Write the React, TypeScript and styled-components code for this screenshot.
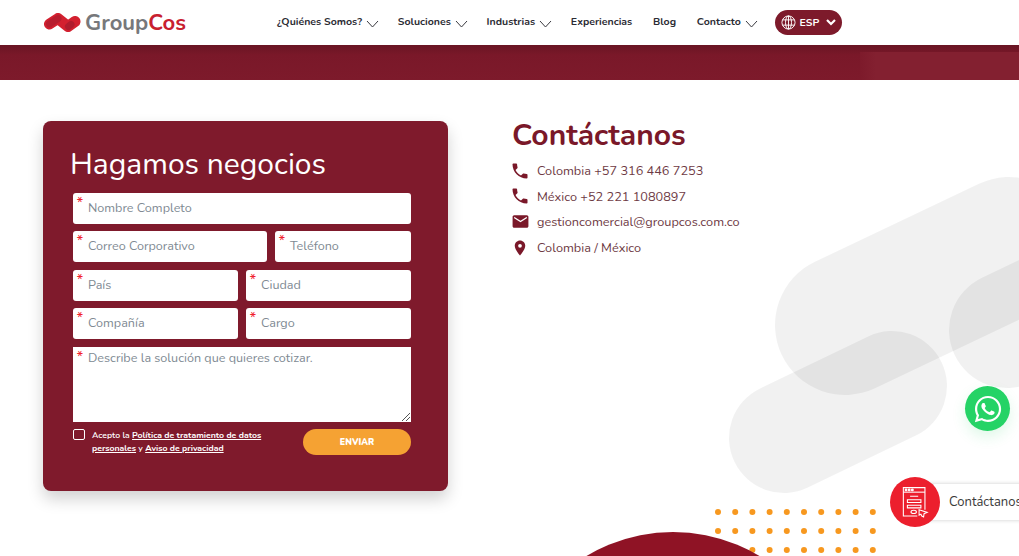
import * as React from "react";
import styled, { createGlobalStyle } from "styled-components";
import { MdPhone, MdEmail, MdLocationOn } from "react-icons/md";
import { FaWhatsapp } from "react-icons/fa";

const FONT = `Nunito, Lato, "Open Sans", sans-serif`;

const GlobalStyle = createGlobalStyle`
  html, body {
    margin: 0;
    padding: 0;
    height: 100%;
    overflow: hidden;
    background: #fff;
    font-family: ${FONT};
  }
  * { box-sizing: border-box; }
`;

const SPage = styled.div`
  position: relative;
  width: 1019px;
  height: 556px;
  overflow: hidden;
  background: #fff;
`;

const SHeader = styled.header`
  height: 45px;
  padding: 0 0 0 44px;
  display: flex;
  align-items: center;
  background: #fff;
`;

const SLogo = styled.div`
  display: flex;
  align-items: center;
  gap: 4px;
  width: 233px;
`;

const SLogoText = styled.span`
  font-size: 22px;
  font-weight: 700;
  color: #77787b;
  & b {
    color: #c8202f;
    font-weight: 700;
  }
`;

const SNav = styled.nav`
  display: flex;
  align-items: center;
  gap: 20.8px;
  padding-bottom: 2px;
`;

const SNavItem = styled.a`
  display: flex;
  align-items: center;
  gap: 4px;
  font-size: 10.55px;
  font-weight: 700;
  color: #2b2b33;
  white-space: nowrap;
`;

const SNavChevron = styled.svg`
  margin: 4px -2px 0 0;
`;

const SLang = styled.div`
  width: 67px;
  height: 25px;
  margin: 2px 0 0 -2px;
  border-radius: 13px;
  background: #7d1a2b;
  color: #fff;
  font-size: 10.5px;
  font-weight: 700;
  display: flex;
  align-items: center;
  padding-left: 6px;
  gap: 4px;
`;

const SLangChevron = styled.svg`
  margin-left: 3px;
`;

const SBanner = styled.div`
  position: relative;
  height: 35px;
  overflow: hidden;
  background: linear-gradient(#691524 0, #7a1829 10px, #7d1a2b 100%);
`;

const SBannerGlow = styled.div`
  position: absolute;
  top: 7px;
  left: 860px;
  width: 220px;
  height: 60px;
  background: linear-gradient(90deg, #7d1a2b, #832030 16px);
`;

const SMain = styled.main`
  position: relative;
  z-index: 1;
  display: flex;
  align-items: flex-start;
  padding: 41px 0 0 43px;
  gap: 64px;
`;

const SCard = styled.form`
  width: 405px;
  height: 370px;
  padding: 25px 37px 0 30px;
  border-radius: 8px;
  background: #7f1a2c;
  box-shadow: 0 8px 16px rgba(0, 0, 0, 0.18);
`;

const SCardTitle = styled.h2`
  margin: 0 0 10px -3px;
  font-size: 30px;
  line-height: 37px;
  font-weight: 400;
  color: #fff;
`;

const SFields = styled.div`
  display: flex;
  flex-direction: column;
  gap: 7.4px;
`;

const SRow = styled.div<{ $cols: string }>`
  display: grid;
  grid-template-columns: ${({ $cols }) => $cols};
  gap: 8px;
`;

const SField = styled.div<{ $tall?: boolean }>`
  position: relative;
  height: ${({ $tall }) => ($tall ? "75.4px" : "31px")};
  border-radius: ${({ $tall }) => ($tall ? "0" : "3px")};
  background: #fff;
  padding: ${({ $tall }) => ($tall ? "3px" : "7px")} 0 0 15px;
  font-size: 12.6px;
  line-height: 16px;
  color: #808a93;
  &::before {
    content: "*";
    position: absolute;
    left: 3.5px;
    top: 3px;
    color: #f0202f;
    font-size: 15px;
    line-height: 14px;
  }
`;

const SResize = styled.svg`
  position: absolute;
  right: 1px;
  bottom: 1px;
`;

const SFooter = styled.div`
  display: flex;
  justify-content: space-between;
  margin-top: 7px;
`;

const SConsent = styled.div`
  display: flex;
  gap: 7px;
  width: 200px;
`;

const SCheck = styled.span`
  flex: none;
  width: 12px;
  height: 11px;
  border: 1px solid #fff;
  border-radius: 2px;
`;

const SConsentText = styled.p`
  margin: 0;
  font-size: 8.7px;
  line-height: 13px;
  font-weight: 600;
  color: #fff;
  white-space: nowrap;
  & a {
    text-decoration: underline;
    font-weight: 700;
  }
`;

const SSubmit = styled.button`
  width: 108px;
  height: 26px;
  border: 0;
  border-radius: 13px;
  background: #f5a233;
  color: #fff;
  font-family: ${FONT};
  font-size: 8.8px;
  font-weight: 900;
`;

const SInfo = styled.section`
  padding-top: 1px;
  color: #7a1829;
`;

const SInfoTitle = styled.h1`
  margin: 0 0 8px;
  font-size: 30px;
  line-height: 28px;
  font-weight: 700;
  color: #7a1829;
`;

const SInfoList = styled.ul`
  margin: 0;
  padding: 0;
  list-style: none;
`;

const SInfoItem = styled.li`
  display: flex;
  align-items: center;
  gap: 7px;
  height: 25.6px;
  margin-left: -2px;
  font-size: 12.72px;
  color: #6e3a44;
`;

const SIconSlot = styled.span`
  flex: none;
  width: 20px;
  display: flex;
  justify-content: center;
  color: #7a1829;
`;

const SDecor = styled.svg`
  position: absolute;
  top: 0;
  left: 0;
`;

const SWhatsApp = styled.a`
  position: absolute;
  left: 965px;
  top: 386px;
  z-index: 2;
  width: 45px;
  height: 45px;
  border-radius: 50%;
  background: #25d366;
  color: #fff;
  display: flex;
  align-items: center;
  justify-content: center;
  box-shadow: 0 6px 14px rgba(37, 211, 102, 0.15);
`;

const SContactTab = styled.a`
  position: absolute;
  left: 925px;
  top: 484px;
  z-index: 2;
  width: 110px;
  height: 36px;
  padding-left: 24px;
  display: flex;
  align-items: center;
  background: #fff;
  border-radius: 4px;
  box-shadow: 0 0 4px rgba(0, 0, 0, 0.2);
  font-size: 13px;
  color: #3a3a3a;
  white-space: nowrap;
`;

const SContactBadge = styled.span`
  position: absolute;
  left: 890px;
  top: 477px;
  z-index: 3;
  width: 50px;
  height: 50px;
  border-radius: 50%;
  background: #ec1f2d;
  display: flex;
  align-items: center;
  justify-content: center;
`;

const Chevron = () => (
  <SNavChevron width="13" height="8" viewBox="0 0 13 8" fill="none" stroke="#3a3a40" strokeWidth="1">
    <path d="M1 1l5.5 6L12 1" />
  </SNavChevron>
);

const Globe = () => (
  <svg width="15" height="15" viewBox="0 0 16 16" fill="none" stroke="#fff" strokeWidth="1">
    <circle cx="8" cy="8" r="7" />
    <ellipse cx="8" cy="8" rx="3.2" ry="7" />
    <path d="M8 1v14M1.6 5.2h12.8M1.6 10.8h12.8" />
  </svg>
);

const LogoMark = () => (
  <svg width="37" height="19" viewBox="0 0 37 19" fill="none" strokeWidth="11" strokeLinecap="round" strokeLinejoin="round">
    <path d="M5.5 11L14 5.5L24 13.5L31 8.5" stroke="#d3202f" />
    <path d="M5.5 11L14 5.5" stroke="#b81d2e" strokeWidth="7" />
    <path d="M24.5 13.5L27 11.5" stroke="#b01c2d" strokeWidth="7" />
  </svg>
);

const FormIcon = () => (
  <svg width="27" height="33" viewBox="0 0 30 36" fill="none" stroke="#fff" strokeWidth="1.2">
    <path d="M17 33H1.5V1.5h24V26" />
    <path d="M1.5 6.5h24" />
    <circle cx="4.5" cy="4" r="1" fill="#fff" />
    <circle cx="8" cy="4" r="1" fill="#fff" />
    <circle cx="11.5" cy="4" r="1" fill="#fff" />
    <path d="M9 11h9M6 15h15v3H6zM6 21h15v3H6z" />
    <ellipse cx="13" cy="28.5" rx="3" ry="1.8" />
    <path d="M19 26l9 3-3.5 1.5L24 34l-2-1-1-2-2 1z" />
  </svg>
);

const pills = [
  { x1: 845, y1: 325, x2: 1009, y2: 247, w: 140 },
  { x1: 784, y1: 438, x2: 892, y2: 386, w: 110 },
  { x1: 1007, y1: 330, x2: 1120, y2: 276, w: 116 },
];

const dots: [number, number][] = [];
for (let r = 0; r < 3; r++) {
  for (let c = 0; c < 10; c++) {
    dots.push([718 + c * 17.2, 512 + r * 19]);
  }
}

const Decoration = () => (
  <SDecor width="1019" height="556" viewBox="0 0 1019 556">
    {pills.map((p) => (
      <line
        key={p.x1}
        x1={p.x1}
        y1={p.y1}
        x2={p.x2}
        y2={p.y2}
        stroke="#000"
        strokeOpacity="0.055"
        strokeWidth={p.w}
        strokeLinecap="round"
      />
    ))}
    {dots.map(([x, y]) => (
      <circle key={`${x}-${y}`} cx={x} cy={y} r="3" fill="#f7981f" />
    ))}
    <circle cx="673" cy="700" r="168" fill="#8f1325" />
  </SDecor>
);

const navItems = [
  { label: "¿Quiénes Somos?", arrow: true },
  { label: "Soluciones", arrow: true },
  { label: "Industrias", arrow: true },
  { label: "Experiencias", arrow: false },
  { label: "Blog", arrow: false },
  { label: "Contacto", arrow: true },
];

const contacts = [
  { icon: <MdPhone size={20} />, text: "Colombia +57 316 446 7253" },
  { icon: <MdPhone size={20} />, text: "México +52 221 1080897" },
  { icon: <MdEmail size={19} />, text: "gestioncomercial@groupcos.com.co" },
  { icon: <MdLocationOn size={18} />, text: "Colombia / México" },
];

export default function App() {
  return (
    <SPage>
      <GlobalStyle />
      <Decoration />
      <SHeader>
        <SLogo>
          <LogoMark />
          <SLogoText>
            Group<b>Cos</b>
          </SLogoText>
        </SLogo>
        <SNav>
          {navItems.map((item) => (
            <SNavItem key={item.label}>
              {item.label}
              {item.arrow && <Chevron />}
            </SNavItem>
          ))}
          <SLang>
            <Globe />
            ESP
            <SLangChevron width="10" height="7" viewBox="0 0 10 7" fill="none" stroke="#fff" strokeWidth="2.2">
              <path d="M1 1l4 4 4-4" />
            </SLangChevron>
          </SLang>
        </SNav>
      </SHeader>
      <SBanner>
        <SBannerGlow />
      </SBanner>
      <SMain>
        <SCard>
          <SCardTitle>Hagamos negocios</SCardTitle>
          <SFields>
            <SField>Nombre Completo</SField>
            <SRow $cols="194px 136px">
              <SField>Correo Corporativo</SField>
              <SField>Teléfono</SField>
            </SRow>
            <SRow $cols="165px 165px">
              <SField>País</SField>
              <SField>Ciudad</SField>
            </SRow>
            <SRow $cols="165px 165px">
              <SField>Compañía</SField>
              <SField>Cargo</SField>
            </SRow>
            <SField $tall>
              Describe la solución que quieres cotizar.
              <SResize width="9" height="9" viewBox="0 0 9 9" stroke="#555" strokeWidth="1">
                <path d="M1 9l8-8M5 9l4-4" />
              </SResize>
            </SField>
          </SFields>
          <SFooter>
            <SConsent>
              <SCheck />
              <SConsentText>
                Acepto la <a>Política de tratamiento de datos</a>
                <br />
                <a>personales</a> y <a>Aviso de privacidad</a>
              </SConsentText>
            </SConsent>
            <SSubmit type="button">ENVIAR</SSubmit>
          </SFooter>
        </SCard>
        <SInfo>
          <SInfoTitle>Contáctanos</SInfoTitle>
          <SInfoList>
            {contacts.map((c) => (
              <SInfoItem key={c.text}>
                <SIconSlot>{c.icon}</SIconSlot>
                {c.text}
              </SInfoItem>
            ))}
          </SInfoList>
        </SInfo>
      </SMain>
      <SWhatsApp>
        <FaWhatsapp size={30} />
      </SWhatsApp>
      <SContactTab>Contáctanos</SContactTab>
      <SContactBadge>
        <FormIcon />
      </SContactBadge>
    </SPage>
  );
}
